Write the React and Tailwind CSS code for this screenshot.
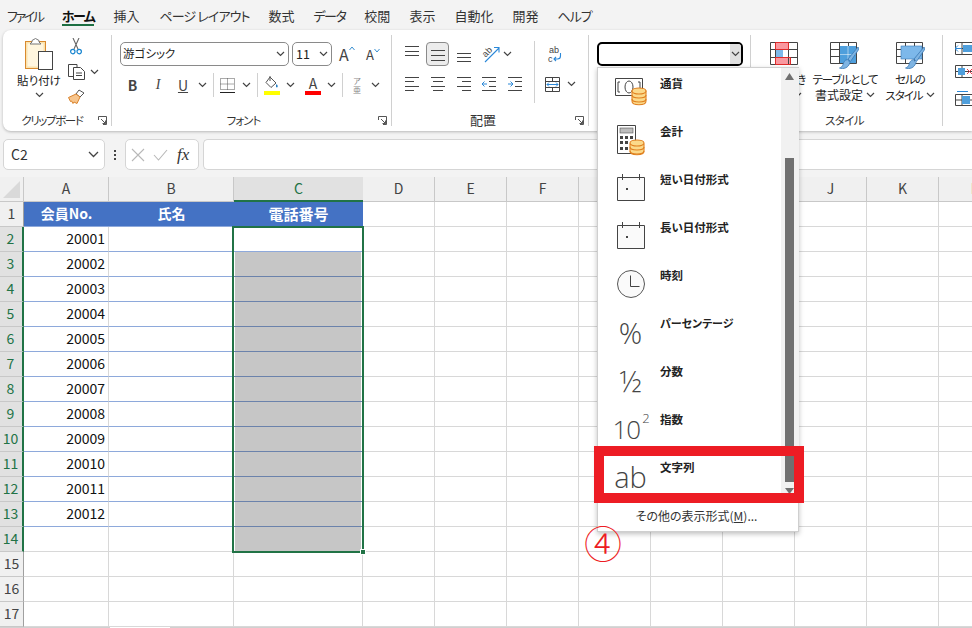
import React from "react";

const Chev = ({ c = "#444" }) => (
  <svg width="9" height="6" viewBox="0 0 9 6" className="shrink-0"><path d="M1 1l3.500 3.500L8 1" fill="none" stroke={c} strokeWidth="1.200" /></svg>
);
const Launcher = () => (
  <svg width="9" height="9" viewBox="0 0 9 9" className="justify-self-end"><path d="M.5 4V.5H8.500V8.500H5M3 3l4.500 4.500M7.500 4.500v3h-3" fill="none" stroke="#555" strokeWidth="1" /></svg>
);
const GroupLabel = ({ children, launcher, cls = "" }) => (
  <div className="grid grid-cols-[1fr_auto_1fr] items-center h-[18px] mt-auto mb-[-3px] pr-[4px]">
    <span />
    <span className={`text-[#333] leading-[18px] whitespace-nowrap ${cls}`}>{children}</span>
    {launcher ? <Launcher /> : <span />}
  </div>
);
const Lines = ({ ys, xs }) => (
  <svg width="14" height="16" viewBox="0 0 14 16">
    {ys.map((y, i) => (
      <line key={i} x1={xs[i][0]} x2={xs[i][1]} y1={y} y2={y} stroke="#444" strokeWidth="1" />
    ))}
  </svg>
);
const full = [[0, 14], [0, 14], [0, 14]];
const row2ys = [1.5, 5.5, 10.5, 14.5];

const Paste = () => (
  <svg width="28" height="33" viewBox="0 0 28 33">
    <rect x=".5" y="3.500" width="20" height="27" fill="#fbe3ae" stroke="#d98a2f" />
    <rect x="2.500" y="5.500" width="16" height="23" fill="#fff6df" />
    <path d="M7 4V2.500L10.500 .5 14 2.500V4l2 2H5z" fill="#fff" stroke="#777" />
    <rect x="13.500" y="13.500" width="14" height="18" fill="#fff" stroke="#444" />
  </svg>
);
const Cut = () => (
  <svg width="12" height="17" viewBox="0 0 12 17">
    <path d="M3 0l5 11M9 0L4 11" fill="none" stroke="#666" strokeWidth="1.100" />
    <circle cx="2.800" cy="13.600" r="2.200" fill="none" stroke="#1a86d0" strokeWidth="1.200" />
    <circle cx="9.200" cy="13.600" r="2.200" fill="none" stroke="#1a86d0" strokeWidth="1.200" />
  </svg>
);
const Copy = () => (
  <svg width="17" height="16" viewBox="0 0 17 16">
    <path d="M5.500 12.500H.5V.5H9V3" fill="none" stroke="#444" />
    <path d="M5.500 3.500h7l4 4v8h-11z" fill="#fff" stroke="#444" />
    <path d="M8 9h6M8 11.500h6" stroke="#444" />
  </svg>
);
const Brush = () => (
  <svg width="17" height="16" viewBox="0 0 17 16">
    <path d="M11 1l5 3-4 4-4-3z" fill="#fff" stroke="#555" />
    <path d="M8 5l4 3-3 6.500-3-1.500-1 1.500-1.500-2.500-1 .5L.5 8.500z" fill="#f7c58d" stroke="#d9822b" />
  </svg>
);
const BorderIcon = () => (
  <svg width="15" height="15" viewBox="0 0 15 15">
    <path d="M.5 .5h14v11H.5zM7.500 .5v11M.5 6h14" fill="none" stroke="#555" strokeDasharray="1 1" />
    <path d="M0 14.500h15" stroke="#222" />
  </svg>
);
const Bucket = () => (
  <svg width="16" height="16" viewBox="0 0 16 16">
    <path d="M6 2l6 6-5 4.500-5-5z" fill="#fff" stroke="#555" />
    <path d="M6 1v5" stroke="#555" />
    <path d="M12.500 9c1.500 1.500 1.500 3 .5 3.500-1 0-1.500-1.500-.5-3.500z" fill="#1a78c2" />
  </svg>
);
const GridBase = ({ children }) => (
  <svg width="29" height="27" viewBox="0 0 29 27">
    <path d="M.5 .5h26v21H.5zM9.500 .5v21M18.500 .5v21M.5 7.500h26M.5 14.500h26" fill="none" stroke="#444" />
    {children}
  </svg>
);
const PenBrush = () => (
  <path d="M28 5L18 17l2.500 2.500L29 7zM17.500 17.500c-3 .5-4 3-4.500 5-.5 2-2 3-3.500 3.500 4 1.500 9 0 10.500-5.500z" fill="#7fb4e2" stroke="#3a78b5" strokeWidth=".8" />
);
const Cond = () => (
  <svg width="28" height="23" viewBox="0 0 28 23">
    <path d="M5.500 .5h13v7h-13zM5.500 15.500h15v7h-15z" fill="#f9989f" stroke="#e02b2b" />
    <rect x="5" y="8" width="8" height="7" fill="#7db8ea" />
    <path d="M.5 .5h27v22H.5zM5.500 .5v22M18.500 .5v22M.5 7.500h27M.5 15.500h27" fill="none" stroke="#444" />
    <path d="M5.500 .5h13v7h-13zM5.500 15.500h15v7h-15z" fill="none" stroke="#e02b2b" />
  </svg>
);
const Money = () => (
  <svg width="32" height="28" viewBox="0 0 32 28">
    <path d="M.5 .5h27v17H.5z" fill="#fff" stroke="#444" />
    <path d="M5 4H3v10h2M23 4h2v10h-2" fill="none" stroke="#444" />
    <ellipse cx="14" cy="9" rx="4" ry="6" fill="none" stroke="#444" />
    <g fill="#fbd98a" stroke="#e0801f" strokeWidth="1.100">
      <path d="M17 13v10c0 5 14 5 14 0V13z" />
      <ellipse cx="24" cy="13" rx="7" ry="3" />
      <path d="M17 17c0 4 14 4 14 0M17 21c0 4 14 4 14 0" fill="none" />
    </g>
  </svg>
);
const Calc = () => (
  <svg width="28" height="31" viewBox="0 0 28 31">
    <path d="M.5 .5h18v28H.5z" fill="#fff" stroke="#444" />
    <rect x="3" y="3" width="13" height="5" fill="#bdbdbd" stroke="#555" strokeWidth=".6" />
    <g fill="#444">
      <rect x="3" y="11" width="3" height="3" /><rect x="8" y="11" width="3" height="3" /><rect x="13" y="11" width="3" height="3" />
      <rect x="3" y="16" width="3" height="3" /><rect x="8" y="16" width="3" height="3" />
      <rect x="3" y="22" width="3" height="3" /><rect x="8" y="22" width="3" height="3" />
    </g>
    <g fill="#fbd98a" stroke="#e0801f" strokeWidth="1.100">
      <path d="M13 19v7c0 5 14 5 14 0v-7z" />
      <ellipse cx="20" cy="18" rx="7" ry="3" />
      <path d="M13 22c0 4 14 4 14 0M13 26c0 4 14 4 14 0" fill="none" />
    </g>
  </svg>
);
const Calendar = () => (
  <svg width="28" height="28" viewBox="0 0 28 28">
    <path d="M.5 3.500h27v23H.5z" fill="#fafafa" stroke="#444" />
    <path d="M5.500 0v6M22.500 0v6" stroke="#444" />
    <rect x="9" y="14" width="2" height="2" fill="#444" />
  </svg>
);
const Clock = () => (
  <svg width="28" height="28" viewBox="0 0 28 28">
    <circle cx="14" cy="14" r="13.500" fill="#fafafa" stroke="#555" />
    <path d="M13.500 5.500v11h9" fill="none" stroke="#444" />
  </svg>
);
const Glyph = ({ children }) => (
  <span className="font-['Open_Sans',sans-serif] font-light text-[#444] leading-none text-[29px]">{children}</span>
);

const items = [
  ["通貨", <Money />],
  ["会計", <Calc />],
  ["短い日付形式", <Calendar />],
  ["長い日付形式", <Calendar />],
  ["時刻", <Clock />],
  ["パーセンテージ", <Glyph>%</Glyph>],
  ["分数", <Glyph>½</Glyph>],
  ["指数", <span className="flex items-start font-['Open_Sans',sans-serif] font-light text-[#444] leading-none text-[26px] tracking-[-1px] mt-[1px]">10<span className="text-[13px] ml-[2px] mt-[-4px]">2</span></span>],
  ["文字列", <Glyph>ab</Glyph>],
];
const tabs = [
  ["ファイル", "tracking-[-2.300px]"],
  ["ホーム", "tracking-[-1.500px] font-bold text-[#111] relative"],
  ["挿入", "mr-[1px]"],
  ["ページ レイアウト", "tracking-[-0.900px]"],
  ["数式", ""],
  ["データ", "tracking-[-1.500px]"],
  ["校閲", ""],
  ["表示", ""],
  ["自動化", ""],
  ["開発", ""],
  ["ヘルプ", "tracking-[-1px]"],
];
const rowNums = Array.from({ length: 17 }, (_, i) => i + 1);
const emptyCols = ["D", "E", "F", "G", "H", "I", "J", "K", "L"];

export default function App() {
  return (
    <div className="relative w-[972px] h-[628px] overflow-hidden bg-[#f3f3f3] flex flex-col font-['Noto_Sans_CJK_JP',sans-serif] [font-feature-settings:'palt'] text-[#333]">
      {/* tabs */}
      <div className="h-[30px] flex pl-[7px] gap-[19px] text-[13px] text-[#333] shrink-0">
        {tabs.map(([t, extra]) => (
          <div key={t} className={`h-[30px] pt-[7px] leading-[18px] whitespace-nowrap ${extra}`}>
            {t}
            {t === "ホーム" && <div className="absolute left-0 right-0 top-[24px] h-[2px] bg-[#1d6f42]" />}
          </div>
        ))}
      </div>

      {/* ribbon */}
      <div className="ml-[3px] h-[101px] shrink-0 bg-white rounded-l-[8px] shadow-[0_1px_3px_rgba(0,0,0,0.25)] flex overflow-hidden">
        {/* clipboard */}
        <div className="w-[109px] shrink-0 flex flex-col my-[5px] border-r border-[#d0d0d0]">
          <div className="flex h-[70px] pt-[3px]">
            <div className="w-[65px] flex flex-col items-center pl-[7px]">
              <Paste />
              <span className="text-[11.5px] leading-[16px] mt-[1px] text-[#222]">貼り付け</span>
              <div className="mt-[4px]"><Chev /></div>
            </div>
            <div className="flex flex-col items-start">
              <div className="ml-[2px]"><Cut /></div>
              <div className="flex items-center gap-[5px] mt-[9px]"><Copy /><Chev /></div>
              <div className="mt-[9px]"><Brush /></div>
            </div>
          </div>
          <GroupLabel launcher cls="text-[11.5px] tracking-[-1.400px] mr-[6px]">クリップボード</GroupLabel>
        </div>
        {/* font */}
        <div className="w-[280px] shrink-0 flex flex-col my-[5px] border-r border-[#d0d0d0]">
          <div className="flex items-center h-[24px] mt-[7px] pl-[8px]">
            <div className="w-[169px] h-[24px] border border-[#8a8a8a] rounded-[5px] flex items-center justify-between pl-[2px] pr-[3px] text-[11.5px] text-[#222]">游ゴシック<Chev /></div>
            <div className="ml-[3px] w-[40px] h-[24px] border border-[#8a8a8a] rounded-[5px] flex items-center justify-between pl-[3px] pr-[3px] text-[12.5px] text-[#222]">11<Chev /></div>
            <div className="ml-[7px] w-[17px] flex items-start text-[#444] text-[16px] leading-none">A<svg width="6" height="5" viewBox="0 0 6 5"><path d="M.5 4L3 1l2.500 3" fill="none" stroke="#3a8fd0" /></svg></div>
            <div className="ml-[10px] w-[15px] flex items-start text-[#444] text-[13px] leading-none">A<svg width="6" height="5" viewBox="0 0 6 5"><path d="M.5 1L3 4l2.500-3" fill="none" stroke="#3a8fd0" /></svg></div>
          </div>
          <div className="flex items-center h-[24px] mt-[7px] pl-[8px] text-[#444]">
            <div className="w-[25px] text-center text-[14px] font-bold leading-none">B</div>
            <div className="w-[26px] text-center text-[14px] italic font-['Liberation_Serif',serif] leading-none">I</div>
            <div className="w-[24px] text-center text-[14px] leading-none underline">U</div>
            <div className="w-[14px] flex justify-center"><Chev /></div>
            <div className="w-[8px] flex justify-center"><div className="w-px h-[24px] bg-[#d0d0d0]" /></div>
            <div className="w-[21px] flex justify-center"><BorderIcon /></div>
            <div className="w-[16px] flex justify-center"><Chev /></div>
            <div className="w-[6px] flex justify-center"><div className="w-px h-[24px] bg-[#d0d0d0]" /></div>
            <div className="w-[24px] flex flex-col items-center"><Bucket /><div className="w-[16px] h-[4px] bg-[#ffff00]" /></div>
            <div className="w-[12px] flex justify-center"><Chev /></div>
            <div className="ml-[5px] w-[24px] flex flex-col items-center"><span className="text-[14px] leading-[15px] text-[#444]">A</span><div className="w-[16px] h-[4px] bg-[#ff0000]" /></div>
            <div className="w-[12px] flex justify-center"><Chev /></div>
            <div className="w-[10px] flex justify-center"><div className="w-px h-[24px] bg-[#d0d0d0]" /></div>
            <div className="w-[20px] flex flex-col items-center text-[8px] leading-[9px] text-[#888]"><span>ア</span><span>亜</span></div>
            <div className="w-[16px] flex justify-center"><Chev /></div>
          </div>
          <GroupLabel launcher cls="text-[11.5px] tracking-[-1px] mr-[12px]">フォント</GroupLabel>
        </div>
        {/* alignment */}
        <div className="w-[197px] shrink-0 flex flex-col my-[5px] border-r border-[#d0d0d0]">
          <div className="flex mt-[6px] pl-[8px]">
            <div className="w-[127px]">
              <div className="flex items-center h-[26px]">
                <div className="w-[24px] flex justify-center"><Lines ys={[0.5, 5.5, 9.5]} xs={full} /></div>
                <div className="ml-[2px] w-[23px] h-[24px] border border-[#8a8a8a] rounded-[4px] bg-[#ececec] flex items-center justify-center"><Lines ys={[4.5, 9.5, 14.5]} xs={full} /></div>
                <div className="ml-[3px] w-[24px] flex justify-center"><Lines ys={[7.5, 11.5, 15.5]} xs={full} /></div>
                <div className="ml-[3px] w-[24px] flex justify-center">
                  <svg width="18" height="18" viewBox="0 0 18 18" className="overflow-visible">
                    <text x="0" y="10" fontSize="9" fill="#444" fontFamily="Liberation Sans" transform="rotate(-45 5 7)">ab</text>
                    <path d="M3 17L17 3M12 2.500h5v5" fill="none" stroke="#2b88d8" strokeWidth="1.100" />
                  </svg>
                </div>
                <div className="w-[8px] flex justify-center"><Chev /></div>
              </div>
              <div className="flex items-center h-[24px] mt-[5px]">
                <div className="w-[24px] flex justify-center"><Lines ys={row2ys} xs={[[0, 14], [0, 9], [0, 14], [0, 9]]} /></div>
                <div className="w-[28px] flex justify-center"><Lines ys={row2ys} xs={[[0, 14], [2, 12], [0, 14], [2, 12]]} /></div>
                <div className="w-[24px] flex justify-center"><Lines ys={row2ys} xs={[[0, 14], [5, 14], [0, 14], [5, 14]]} /></div>
                <div className="w-[28px] flex justify-center">
                  <svg width="14" height="16" viewBox="0 0 14 16"><path d="M0 1.500h14M7 5.500h7M7 10.500h7M0 14.500h14" stroke="#444" /><path d="M5 8H0M2.500 5.500L0 8l2.500 2.500" fill="none" stroke="#2b88d8" /></svg>
                </div>
                <div className="w-[24px] flex justify-center">
                  <svg width="14" height="16" viewBox="0 0 14 16"><path d="M0 1.500h14M7 5.500h7M7 10.500h7M0 14.500h14" stroke="#444" /><path d="M0 8h5M2.500 5.500L5 8l-2.500 2.500" fill="none" stroke="#2b88d8" /></svg>
                </div>
              </div>
            </div>
            <div className="ml-[7px] w-px h-[62px] bg-[#d0d0d0]" />
            <div className="flex flex-col">
              <div className="ml-[12px] h-[26px] flex items-center">
                <svg width="16" height="18" viewBox="0 0 16 18">
                  <text x="2" y="8" fontSize="9" fill="#444" fontFamily="Liberation Sans">ab</text>
                  <text x="1" y="16.500" fontSize="9" fill="#444" fontFamily="Liberation Sans">c</text>
                  <path d="M13.500 8v3c0 2-1 3-3 3H7M9 12l-2 2 2 2" fill="none" stroke="#2b88d8" strokeWidth="1.100" />
                </svg>
              </div>
              <div className="ml-[10px] h-[24px] mt-[5px] flex items-center gap-[7px]">
                <svg width="15" height="15" viewBox="0 0 15 15">
                  <path d="M.5 .5h14v14H.5zM.5 4.500h14M.5 10.500h14M7.500 .5v4M7.500 10.500v4" fill="#fff" stroke="#444" />
                  <path d="M2 7.500h11M4 5.500l-2 2 2 2M11 5.500l2 2-2 2" fill="none" stroke="#2b88d8" />
                </svg>
                <Chev />
              </div>
            </div>
          </div>
          <GroupLabel launcher cls="text-[13px] mr-[10px]">配置</GroupLabel>
        </div>
        {/* number */}
        <div className="w-[162px] shrink-0 flex flex-col my-[5px] border-r border-[#d0d0d0]">
          <div className="ml-[8px] mt-[7px] w-[146px] h-[24px] border-2 border-black rounded-[5px] flex justify-end overflow-hidden">
            <div className="w-[11px] h-full bg-[#e0e0e0] flex items-center justify-center"><Chev /></div>
          </div>
        </div>
        {/* styles */}
        <div className="w-[192px] shrink-0 flex flex-col my-[5px] border-r border-[#d0d0d0]">
          <div className="flex mt-[7px] text-[11.5px] leading-[16px] text-[#222]">
            <div className="ml-[8px] w-[50px] flex flex-col items-center">
              <div className="h-[29px]"><Cond /></div>
              <span>条件付き</span>
              <span className="flex items-center gap-[3px]">書式<Chev /></span>
            </div>
            <div className="ml-[-2px] w-[76px] flex flex-col items-center">
              <div className="h-[29px] w-[29px] mr-[1px]">
                <GridBase>
                  <rect x="10" y="4" width="16" height="17" fill="#4f9fdc" />
                  <path d="M10 12.500h16M18 4v17" stroke="#fff" strokeWidth=".5" />
                  <PenBrush />
                </GridBase>
              </div>
              <span className="whitespace-nowrap tracking-[-1px]">テーブルとして</span>
              <span className="flex items-center gap-[3px] text-[12px]">書式設定<Chev /></span>
            </div>
            <div className="ml-[4px] w-[46px] flex flex-col items-center">
              <div className="h-[29px] w-[29px]">
                <GridBase>
                  <rect x="5" y="4" width="21" height="13" fill="#7db8ea" stroke="#3a78b5" strokeWidth=".6" />
                  <PenBrush />
                </GridBase>
              </div>
              <span className="tracking-[-1px]">セルの</span>
              <span className="flex items-center gap-[3px] whitespace-nowrap tracking-[-1px]">スタイル<Chev /></span>
            </div>
          </div>
          <GroupLabel cls="text-[11.5px] tracking-[-0.600px]">スタイル</GroupLabel>
        </div>
        {/* cells */}
        <div className="flex flex-col pt-[12px] pl-[12px]">
          <svg width="20" height="13" viewBox="0 0 20 13" className="shrink-0"><path d="M.5 .5h19v12H.5zM.5 6.500h19M7 .5v12" fill="#fff" stroke="#444" /><rect x="8" y="3" width="11" height="7" fill="#4f9fdc" /><path d="M7 6.500H0M3 3.500L0 6.500l3 3" fill="none" stroke="#2b88d8" /></svg>
          <svg width="20" height="13" viewBox="0 0 20 13" className="shrink-0 mt-[10px]"><path d="M.5 .5h19v12H.5zM.5 6.500h19M7 .5v12" fill="#fff" stroke="#444" /><rect x="3" y="3" width="7" height="7" fill="#4f9fdc" /><path d="M12 4l5 5M17 4l-5 5" stroke="#e04050" /></svg>
          <svg width="20" height="15" viewBox="0 0 20 15" className="shrink-0 mt-[13px]"><path d="M.5 3.500h19v11H.5zM.5 9h19M7 3.500v11" fill="#fff" stroke="#444" /><rect x="7" y="5" width="8" height="8" fill="#4f9fdc" /><path d="M2 .5h11" stroke="#2b88d8" /></svg>
        </div>
      </div>

      {/* formula bar */}
      <div className="mt-[8px] ml-[3px] h-[31px] shrink-0 flex items-stretch">
        <div className="w-[102px] bg-white border border-[#d5d5d5] rounded-[5px] flex items-center justify-between pl-[7px] pr-[5px] text-[14px] text-[#333]">
          C2
          <svg width="11" height="7" viewBox="0 0 11 7"><path d="M1 1l4.500 4.500L10 1" fill="none" stroke="#444" strokeWidth="1.300" /></svg>
        </div>
        <div className="w-[20px] flex flex-col items-center justify-center gap-[2px]">
          <div className="w-[2px] h-[2px] bg-[#444]" /><div className="w-[2px] h-[2px] bg-[#444]" /><div className="w-[2px] h-[2px] bg-[#444]" />
        </div>
        <div className="w-[74px] bg-white border border-[#d5d5d5] rounded-[5px] flex items-center pl-[5px]">
          <svg width="14" height="14" viewBox="0 0 14 14"><path d="M1 1l12 12M13 1L1 13" stroke="#b8b8b8" strokeWidth="1.100" /></svg>
          <svg width="15" height="12" viewBox="0 0 15 12" className="ml-[8px]"><path d="M1 6l4.500 5L14 1" fill="none" stroke="#b8b8b8" strokeWidth="1.100" /></svg>
          <span className="ml-[9px] font-['Liberation_Serif',serif] italic text-[17px] text-[#333] leading-none">fx</span>
        </div>
        <div className="ml-[4px] flex-1 bg-white border border-[#d5d5d5] border-r-0 rounded-l-[5px]" />
      </div>

      {/* sheet */}
      <div className="relative mt-[7px] w-[972px] grid grid-cols-[24px_85px_125px_129px_repeat(9,72px)] auto-rows-[25px] bg-white text-[14px] leading-[23px]">
        {/* corner */}
        <div className="bg-[#f0f0f0] border-r border-b border-[#c8c8c8] flex items-end justify-end pr-[3px] pb-[3px]">
          <svg width="17" height="17" viewBox="0 0 17 17"><path d="M17 0v17H0z" fill="#d9d9d9" /></svg>
        </div>
        <div className="bg-[#f0f0f0] border-r border-b border-[#c8c8c8] text-center text-[#444]">A</div>
        <div className="bg-[#f0f0f0] border-r border-b border-[#c8c8c8] text-center text-[#444]">B</div>
        <div className="bg-[#e1e1e1] border-b-2 border-[#217346] text-center text-[#217346]">C</div>
        {emptyCols.map((c) => (
          <div key={c} className="bg-[#f0f0f0] border-r border-b border-[#c8c8c8] text-center text-[#444]">{c}</div>
        ))}
        {rowNums.map((r) => {
          const sel = r >= 2 && r <= 14;
          const data = r >= 2 && r <= 13;
          const tableBorder = data ? "border-b-[#8ea9db]" : "border-b-[#d8d8d8]";
          return (
            <React.Fragment key={r}>
              <div className={sel ? "bg-[#e1e1e1] border-r-2 border-r-[#217346] border-b border-b-[#c8c8c8] text-center pr-[1px] text-[#217346]" : "bg-[#f0f0f0] border-r border-r-[#a0a0a0] border-b border-b-[#c8c8c8] text-center text-[#444]"}>{r}</div>
              {r === 1 ? (
                <>
                  <div className="bg-[#4472c4] border-b border-b-[#8ea9db] text-center text-white font-bold">会員No.</div>
                  <div className="bg-[#4472c4] border-b border-b-[#8ea9db] text-center text-white font-bold">氏名</div>
                  <div className="bg-[#4472c4] border-b border-b-[#8ea9db] text-center text-white font-bold text-[15px]">電話番号</div>
                </>
              ) : (
                <>
                  <div className={`border-r border-r-[#d8d8d8] border-b ${tableBorder} text-right pr-[3px] text-[#111] leading-[22px]`}>{data ? 20000 + r - 1 : ""}</div>
                  <div className={`border-r border-r-[#d8d8d8] border-b ${tableBorder}`} />
                  <div className={`border-r border-r-[#d8d8d8] border-b ${r >= 3 && r <= 13 ? "border-b-[#6b82ab]" : tableBorder}`}>
                    {r >= 3 && r <= 14 && <div className="ml-px mr-px h-full bg-[#c6c6c6]" />}
                  </div>
                </>
              )}
              {emptyCols.map((c) => (
                <div key={c} className="border-r border-b border-[#d8d8d8]" />
              ))}
            </React.Fragment>
          );
        })}
        {/* selection */}
        <div className="absolute left-[232px] top-[49px] w-[132px] h-[327px] border-2 border-[#217346]" />
        <div className="absolute left-[360px] top-[372px] w-[6px] h-[6px] bg-[#217346] border border-white" />
      </div>
      <div className="flex h-px">
        <div className="w-[110px] bg-[#d0d0d0]" />
        <div className="w-[60px] bg-white" />
        <div className="flex-1 bg-[#d0d0d0]" />
      </div>

      {/* dropdown */}
      <div className="absolute left-[597px] top-[67px] w-[202px] h-[465px] bg-white border border-[#cfcfcf] shadow-[0_2px_5px_rgba(0,0,0,0.25)] flex flex-col">
        <div className="flex h-[429px]">
          <div className="flex-1">
            {items.map(([label, icon]) => (
              <div key={label} className="h-[48px] flex">
                <div className="w-[62px] flex items-center justify-center pl-[3px] shrink-0">{icon}</div>
                <div className={`pt-[7px] leading-[16px] font-bold text-[#222] ${label === "パーセンテージ" ? "text-[11px]" : "text-[11.5px]"}`}>{label}</div>
              </div>
            ))}
          </div>
          <div className="w-[18px] h-full bg-[#f1f1f1] flex flex-col px-[4px] pt-[5px] shrink-0 -mr-px">
            <svg width="9" height="7" viewBox="0 0 9 7"><path d="M4.500 0L9 7H0z" fill="#707070" /></svg>
            <div className="mt-[78px] h-[324px] w-[9px] bg-[#707070]" />
            <svg width="9" height="6" viewBox="0 0 9 6" className="mt-[6px]"><path d="M0 0h9L4.500 6z" fill="#707070" /></svg>
          </div>
        </div>
        <div className="flex-1 flex items-center justify-center text-[12px] text-[#333] pt-[4px] pr-[3px]">
          <span>その他の表示形式(<span className="underline">M</span>)...</span>
        </div>
      </div>

      {/* annotation */}
      <div className="absolute left-[594px] top-[446px] w-[210px] h-[57px] border-[10px] border-[#ed1c24]" />
      <div className="absolute left-[584px] top-[520px] text-[38px] leading-[44px] font-light text-[#ed1c24]">④</div>
    </div>
  );
}
